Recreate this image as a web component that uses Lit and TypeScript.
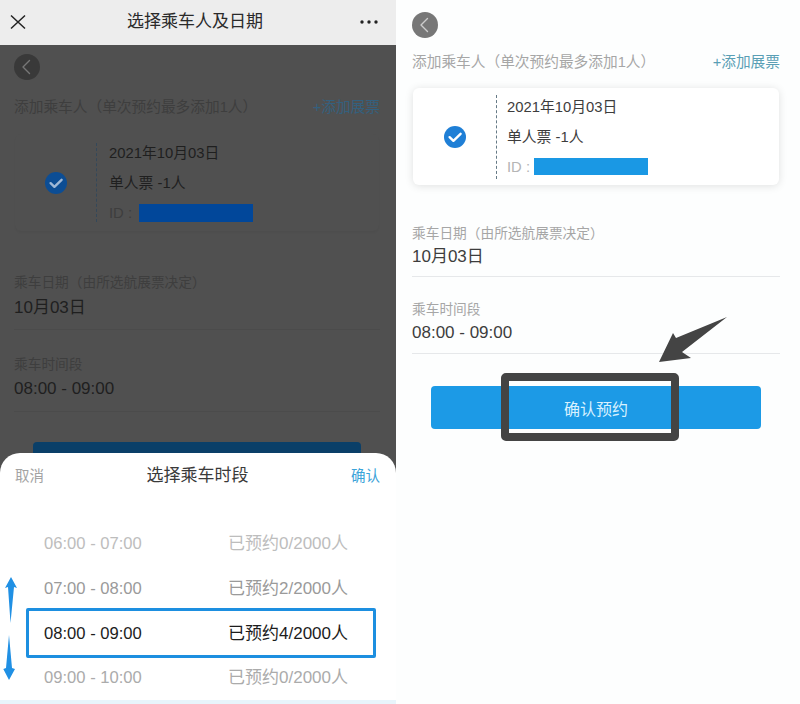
import { LitElement, html, css, svg } from "lit";
import { customElement } from "lit/decorators.js";

const CHECK = html`<svg class="check" viewBox="0 0 22 22" aria-hidden="true">
  <circle cx="11" cy="11" r="11" fill="currentColor"></circle>
  <path d="M5.6 11.2 L9.4 14.8 L16.6 7.8" fill="none" stroke="var(--check-mark)" stroke-width="2.4" stroke-linecap="round" stroke-linejoin="round"></path>
</svg>`;

const BACK = html`<div class="back"><svg viewBox="0 0 26 26" width="26" height="26" aria-hidden="true">
  <path d="M15.5 6.5 L9 13 L15.5 19.5" fill="none" stroke="var(--back-mark)" stroke-width="1.4" stroke-linecap="round" stroke-linejoin="round"></path>
</svg></div>`;

function form(cls: string, cta: string) {
  return html`<div class="form ${cls}">
    ${BACK}
    <div class="section"><span>添加乘车人（单次预约最多添加1人）</span><span class="link">+添加展票</span></div>
    <div class="card">
      <div class="check-col">${CHECK}</div>
      <div class="dash"></div>
      <div class="rows">
        <div>2021年10月03日</div>
        <div>单人票 -1人</div>
        <div class="id"><span class="id-key">ID :</span><span class="bar"></span></div>
      </div>
    </div>
    <div class="label l1">乘车日期（由所选航展票决定）</div>
    <div class="value v1">10月03日</div>
    <div class="label l2">乘车时间段</div>
    <div class="value v2">08:00 - 09:00</div>
    <div class="cta">${cta}</div>
  </div>`;
}

const SLOTS = [
  { t: "06:00 - 07:00", c: "已预约0/2000人", k: "far" },
  { t: "07:00 - 08:00", c: "已预约2/2000人", k: "near" },
  { t: "08:00 - 09:00", c: "已预约4/2000人", k: "sel" },
  { t: "09:00 - 10:00", c: "已预约0/2000人", k: "mid" },
];

@customElement("app-root")
export class AppRoot extends LitElement {
  static styles = css`
    :host {
      display: block;
      width: 800px;
      height: 704px;
      overflow: hidden;
      background: #fdfefe;
      font-family: "Liberation Sans", "Noto Sans CJK SC", sans-serif;
    }
    * { box-sizing: border-box; }
    .shot { display: grid; grid-template-columns: 396px 1fr; gap: 1px; height: 704px; }

    .left { position: relative; height: 704px; overflow: hidden; display: flex; flex-direction: column; background: #505050; }
    .topbar { height: 45px; flex: none; background: #ededed; display: grid; grid-template-columns: 44px 1fr 50px; align-items: center; padding-bottom: 1px; color: #222; }
    .topbar svg { display: block; }
    .close { padding-left: 10px; }
    .title { text-align: center; font-size: 17px; line-height: 22px; color: #2a2a2a; }
    .more { display: flex; justify-content: flex-end; padding-right: 18px; }

    .form {
      --check-mark: #fff;
      --back-mark: #ccc;
      display: flex;
      flex-direction: column;
    }
    .light {
      padding: 12px 20px 0 15px;
      --c-back: #777;
      --c-label: #a6a6a6;
      --c-value: #3d3d3d;
      --c-link: #5a9fb5;
      --c-line: #e6e8ea;
      --c-check: #1f7fd6;
      --c-bar: #1a98e4;
      --c-id: #b5b5b5;
      --c-cta: #1c9ae6;
      --c-cta-text: #d8f1ff;
      --c-dash: #667a86;
      --card-bg: #fff;
      --card-shadow: 0 1px 8px rgba(0, 0, 0, 0.12);
      --section-mt: 12px;
      --card-mt: 18px;
      --l1-mt: 39px;
      --v-mt: 1px;
      --v1-pb: 7px;
      --l2-mt: 23px;
      --v2-mt: 1px;
      --v2-pb: 8px;
      --cta-mt: 32px;
      --dash-h: 84px;
      --check-w: 83px;
      --rows-ml: 10px;
      --id-w: 27px;
      --bar-h: 17px;
    }
    .dark {
      padding: 9px 16px 0 14px;
      --back-mark: #777;
      --c-back: #393939;
      --c-label: #3e3e3e;
      --c-value: #1f1f1f;
      --c-link: #34607e;
      --c-line: #4b4b4b;
      --c-check: #0c4d94;
      --check-mark: #9fb8d6;
      --c-bar: #01479a;
      --c-id: #3e3e3e;
      --c-cta: #0a3f68;
      --c-cta-text: #0a3f68;
      --c-dash: #34485a;
      --card-bg: #505050;
      --card-shadow: 0 2px 2px rgba(0, 0, 0, 0.03);
      --section-mt: 15px;
      --card-mt: 19px;
      --l1-mt: 42px;
      --v-mt: 3px;
      --v1-pb: 9px;
      --l2-mt: 25px;
      --v2-mt: 2px;
      --v2-pb: 10px;
      --cta-mt: 30px;
      --dash-h: 79px;
      --check-w: 81px;
      --rows-ml: 12px;
      --id-w: 30px;
      --bar-h: 18px;
    }
    .back { width: 26px; height: 26px; border-radius: 50%; background: var(--c-back); flex: none; }
    .back svg { display: block; }
    .section {
      margin-top: var(--section-mt);
      height: 20px;
      display: flex;
      justify-content: space-between;
      align-items: center;
      font-size: 14.7px;
      color: var(--c-label);
      white-space: nowrap;
    }
    .link { color: var(--c-link); font-size: 14.7px; }
    .card {
      margin-top: var(--card-mt);
      margin-left: 1px;
      margin-right: 1px;
      height: 97px;
      flex: none;
      display: flex;
      align-items: center;
      border-radius: 6px;
      background: var(--card-bg);
      box-shadow: var(--card-shadow);
    }
    .check-col { width: var(--check-w); flex: none; display: flex; justify-content: center; padding-left: 1px; }
    .check { width: 22px; height: 22px; display: block; color: var(--c-check); }
    .dash { height: var(--dash-h); border-left: 1px dashed var(--c-dash); flex: none; }
    .rows { margin-left: var(--rows-ml); font-size: 14.8px; line-height: 30px; color: var(--c-value); white-space: nowrap; }
    .id { display: flex; align-items: center; color: var(--c-id); }
    .id-key { width: var(--id-w); flex: none; }
    .bar { width: 114px; height: var(--bar-h); background: var(--c-bar); }
    .label { font-size: 13.7px; line-height: 20px; height: 20px; color: var(--c-label); white-space: nowrap; }
    .value { font-size: 17px; line-height: 24px; color: var(--c-value); border-bottom: 1px solid var(--c-line); white-space: nowrap; }
    .l1 { margin-top: var(--l1-mt); }
    .v1 { margin-top: var(--v-mt); padding-bottom: var(--v1-pb); }
    .l2 { margin-top: var(--l2-mt); }
    .v2 { margin-top: var(--v2-mt); padding-bottom: var(--v2-pb); }
    .cta {
      margin: var(--cta-mt) 19px 0;
      height: 43px;
      flex: none;
      border-radius: 4px;
      background: var(--c-cta);
      color: var(--c-cta-text);
      font-size: 16px;
      display: flex;
      align-items: center;
      justify-content: center;
    }

    .sheet {
      position: absolute;
      left: 0;
      right: 0;
      top: 453px;
      bottom: 0;
      background: #fff;
      border-radius: 20px 20px 0 0;
      display: flex;
      flex-direction: column;
    }
    .sheet-head {
      height: 45px;
      flex: none;
      padding: 0 16px 0 15px;
      display: grid;
      grid-template-columns: 60px 1fr 60px;
      align-items: center;
      font-size: 14.5px;
      line-height: 22px;
      color: #a3a3a3;
    }
    .sheet-title { text-align: center; font-size: 17px; color: #3a3a3a; }
    .ok { text-align: right; color: #3ba3d9; }
    .slots { margin-top: 23px; display: flex; flex-direction: column; }
    .slot { height: 45px; display: flex; align-items: baseline; padding-left: 44px; font-size: 17px; line-height: 45px; white-space: nowrap; }
    .time { width: 184px; flex: none; font-size: 16.6px; }
    .far { color: #bdbdbd; }
    .near { color: #9a9a9a; }
    .mid { color: #ababab; }
    .sel {
      height: 50px;
      margin: -3px 20px -3px 26px;
      padding-left: 15px;
      border: 3px solid #1d8fe0;
      border-radius: 2px;
      line-height: 46px;
      color: #1c1c1c;
    }
    .foot { margin-top: auto; height: 4px; background: #e8f4fb; }
    .scroll { position: absolute; left: 0; top: 122px; }

    .right { position: relative; height: 704px; }
    .pointer { position: absolute; left: 0; top: 0; pointer-events: none; }
    .frame {
      position: absolute;
      left: 104px;
      top: 373px;
      width: 178px;
      height: 68px;
      border: 8px solid #444;
      border-radius: 5px;
    }
  `;

  render() {
    return html`<div class="shot">
      <div class="left">
        <div class="topbar">
          <div class="close"><svg width="16" height="16" viewBox="0 0 16 16" aria-hidden="true"><path d="M1 1.5 L15 14.5 M15 1.5 L1 14.5" fill="none" stroke="#222" stroke-width="1.5"></path></svg></div>
          <div class="title">选择乘车人及日期</div>
          <div class="more"><svg width="18" height="4" viewBox="0 0 18 4" aria-hidden="true"><circle cx="2" cy="2" r="1.7" fill="#222"></circle><circle cx="9" cy="2" r="1.7" fill="#222"></circle><circle cx="16" cy="2" r="1.7" fill="#222"></circle></svg></div>
        </div>
        ${form("dark", "")}
        <div class="sheet">
          <div class="sheet-head">
            <span>取消</span>
            <span class="sheet-title">选择乘车时段</span>
            <span class="ok">确认</span>
          </div>
          <div class="slots">
            ${SLOTS.map((s) => html`<div class="slot ${s.k}"><span class="time">${s.t}</span><span>${s.c}</span></div>`)}
          </div>
          <div class="foot"></div>
          <svg class="scroll" width="20" height="108" viewBox="0 0 20 108" aria-hidden="true">
            ${svg`<path d="M11 2 L17 13 L14 12 L10.5 48 L8 12 L5 13 Z" fill="#2090e4"></path>
            <path d="M9 60 L12 93 L15 94 L9 105 L3.3 94 L6 93 Z" fill="#2090e4"></path>`}
          </svg>
        </div>
      </div>
      <div class="right">
        ${form("light", "确认预约")}
        <div class="frame"></div>
        <svg class="pointer" width="403" height="400" viewBox="397 0 403 400" aria-hidden="true">
          ${svg`<path d="M727 317 L682 352 L691 358 L659 362 L673 333 L676 338 Z" fill="#444"></path>`}
        </svg>
      </div>
    </div>`;
  }
}
